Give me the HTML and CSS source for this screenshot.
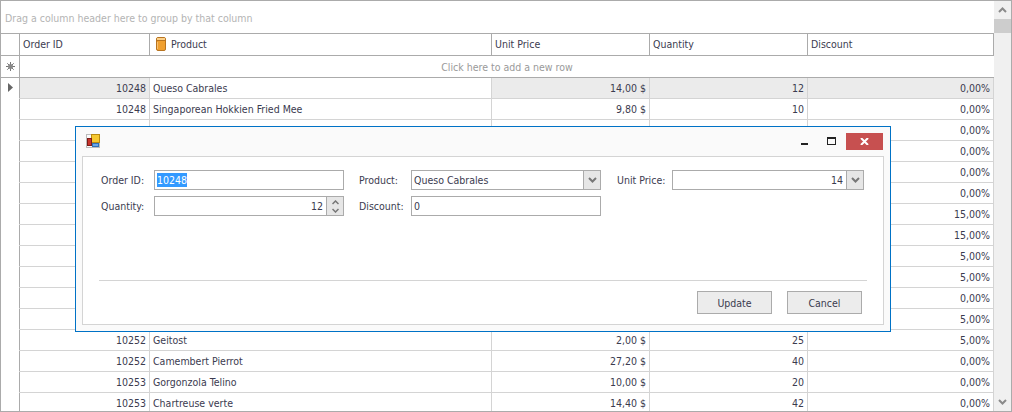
FILE: index.html
```html
<!DOCTYPE html>
<html lang="en">
<head>
  <meta charset="UTF-8" />
  <title>Grid edit form</title>
  <link rel="stylesheet" href="styles.css">
</head>
<body>
  <div class="grid-control">
    <div class="group-panel">Drag a column header here to group by that column</div>
    <div class="grid-main">
      <table class="grid">
        <colgroup>
          <col class="col-ind"><col class="col-id"><col class="col-product"><col class="col-price"><col class="col-qty"><col class="col-disc">
        </colgroup>
        <thead>
          <tr>
            <th class="ind"></th>
            <th>Order ID</th>
            <th class="th-product">
              <svg class="db-icon" width="10" height="14" viewBox="0 0 10 14"><rect x="0.5" y="0.5" width="9" height="13" rx="1.5" fill="#f0a030" stroke="#b87420"/><rect x="1" y="1" width="8" height="2" fill="#fbd08a"/><path d="M1 3.5h8" stroke="#b87420"/><path d="M1.5 5v7" stroke="#f8c070"/></svg>
              Product
            </th>
            <th>Unit Price</th>
            <th>Quantity</th>
            <th>Discount</th>
          </tr>
        </thead>
        <tbody>
          <tr class="new-row">
            <td class="ind"><svg width="9" height="9" viewBox="0 0 9 9"><path d="M4.5 0v9M0 4.5h9M1.3 1.3l6.4 6.4M7.7 1.3l-6.4 6.4" stroke="#777" stroke-width="1"/><circle cx="4.5" cy="4.5" r="2.5" fill="#888"/></svg></td>
            <td colspan="5" class="new-hint">Click here to add a new row</td>
          </tr>
          <tr class="focused">
            <td class="ind"><svg width="5" height="9" viewBox="0 0 5 9"><path d="M0 0l5 4.5-5 4.5z" fill="#666"/></svg></td>
            <td class="num">10248</td><td>Queso Cabrales</td><td class="num">14,00 $</td><td class="num">12</td><td class="num">0,00%</td>
          </tr>
          <tr><td class="ind"></td><td class="num">10248</td><td>Singaporean Hokkien Fried Mee</td><td class="num">9,80 $</td><td class="num">10</td><td class="num">0,00%</td></tr>
          <tr><td class="ind"></td><td class="num">10248</td><td>Mozzarella di Giovanni</td><td class="num">34,80 $</td><td class="num">5</td><td class="num">0,00%</td></tr>
          <!-- rows behind the dialog only show their discount -->
          <tr><td class="ind"></td><td></td><td></td><td></td><td></td><td class="num">0,00%</td></tr>
          <tr><td class="ind"></td><td></td><td></td><td></td><td></td><td class="num">0,00%</td></tr>
          <tr><td class="ind"></td><td></td><td></td><td></td><td></td><td class="num">0,00%</td></tr>
          <tr><td class="ind"></td><td></td><td></td><td></td><td></td><td class="num">15,00%</td></tr>
          <tr><td class="ind"></td><td></td><td></td><td></td><td></td><td class="num">15,00%</td></tr>
          <tr><td class="ind"></td><td></td><td></td><td></td><td></td><td class="num">5,00%</td></tr>
          <tr><td class="ind"></td><td></td><td></td><td></td><td></td><td class="num">5,00%</td></tr>
          <tr><td class="ind"></td><td></td><td></td><td></td><td></td><td class="num">0,00%</td></tr>
          <tr><td class="ind"></td><td></td><td></td><td></td><td></td><td class="num">5,00%</td></tr>
          <tr><td class="ind"></td><td class="num">10252</td><td>Geitost</td><td class="num">2,00 $</td><td class="num">25</td><td class="num">5,00%</td></tr>
          <tr><td class="ind"></td><td class="num">10252</td><td>Camembert Pierrot</td><td class="num">27,20 $</td><td class="num">40</td><td class="num">0,00%</td></tr>
          <tr><td class="ind"></td><td class="num">10253</td><td>Gorgonzola Telino</td><td class="num">10,00 $</td><td class="num">20</td><td class="num">0,00%</td></tr>
          <tr><td class="ind"></td><td class="num">10253</td><td>Chartreuse verte</td><td class="num">14,40 $</td><td class="num">42</td><td class="num">0,00%</td></tr>
        </tbody>
      </table>
    </div>
    <div class="scrollbar">
      <div class="scroll-btn"><svg width="9" height="6" viewBox="0 0 9 6"><path d="M1 5l3.5-3.5L8 5" fill="none" stroke="#8a8a8a" stroke-width="2"/></svg></div>
      <div class="scroll-thumb"></div>
      <div class="scroll-track"></div>
      <div class="scroll-btn"><svg width="9" height="6" viewBox="0 0 9 6"><path d="M1 1l3.5 3.5L8 1" fill="none" stroke="#8a8a8a" stroke-width="2"/></svg></div>
    </div>
  </div>

  <div class="dialog">
    <div class="titlebar">
      <svg class="app-icon" width="14" height="14" viewBox="0 0 14 14">
        <path d="M0 0.5h14M0 4.5h6M0 13.5h14M0.5 0v14M13.5 0v14" stroke="#bbb" fill="none"/>
        <rect x="5.5" y="0.5" width="8" height="8" fill="#f6c830" stroke="#b98a10"/>
        <rect x="1.5" y="4.5" width="4" height="7" fill="#c8342c" stroke="#7d1c18"/>
        <rect x="6.5" y="9.5" width="6" height="3" fill="#6aa6e8" stroke="#2f6fb5"/>
      </svg>
      <div class="win-buttons">
        <span class="win-min"></span>
        <span class="win-max"></span>
        <span class="win-close"><svg width="9" height="7" viewBox="0 0 9 7"><path d="M1 0l7 7M8 0l-7 7" stroke="#fff" stroke-width="2"/></svg></span>
      </div>
    </div>
    <div class="dialog-panel">
      <div class="form-grid">
        <label class="lbl lbl-start">Order ID:</label>
        <div class="field"><span class="field-text"><span class="selected">10248</span></span></div>
        <label class="lbl">Product:</label>
        <div class="field"><span class="field-text">Queso Cabrales</span><span class="drop-btn"><svg width="9" height="6" viewBox="0 0 9 6"><path d="M1 1l3.5 3.5L8 1" fill="none" stroke="#777" stroke-width="2"/></svg></span></div>
        <label class="lbl lbl-last">Unit Price:</label>
        <div class="field"><span class="field-text right">14</span><span class="drop-btn"><svg width="9" height="6" viewBox="0 0 9 6"><path d="M1 1l3.5 3.5L8 1" fill="none" stroke="#777" stroke-width="2"/></svg></span></div>

        <label class="lbl lbl-start">Quantity:</label>
        <div class="field"><span class="field-text right">12</span>
          <span class="spin-btn">
            <svg width="7" height="5" viewBox="0 0 7 5"><path d="M0.5 4l3-3 3 3" fill="none" stroke="#777" stroke-width="1.5"/></svg>
            <svg width="7" height="5" viewBox="0 0 7 5"><path d="M0.5 1l3 3 3-3" fill="none" stroke="#777" stroke-width="1.5"/></svg>
          </span>
        </div>
        <label class="lbl">Discount:</label>
        <div class="field"><span class="field-text">0</span></div>
      </div>
      <div class="dialog-footer">
        <button class="btn">Update</button>
        <button class="btn">Cancel</button>
      </div>
    </div>
  </div>
</body>
</html>
```

FILE: styles.css
```css
html, body {
  margin: 0;
  padding: 0;
  height: 100%;
  overflow: hidden;
}
body {
  font-family: 'DejaVu Sans Condensed', 'DejaVu Sans', sans-serif;
  font-stretch: condensed;
  font-size: 10.5px;
  color: #3b3b4f;
  background: #fff;
}
.grid-control {
  position: relative;
  box-sizing: border-box;
  width: 1012px;
  height: 412px;
  border: 1px solid #ababab;
  overflow: hidden;
  padding-right: 17px;
}
.group-panel {
  height: 32px;
  line-height: 34px;
  padding-left: 4px;
  color: #b4b4b4;
  border-bottom: 1px solid #ababab;
}
.grid-main {
  height: 377px;
  overflow: hidden;
}
.grid {
  table-layout: fixed;
  border-collapse: separate;
  border-spacing: 0;
  width: 993px;
}
.col-ind { width: 19px; }
.col-id { width: 130px; }
.col-product { width: 342px; }
.col-price { width: 158px; }
.col-qty { width: 158px; }
.col-disc { width: 186px; }

.grid th {
  box-sizing: border-box;
  height: 22px;
  padding: 0 0 1px 3px;
  font-weight: normal;
  text-align: left;
  border-right: 1px solid #ababab;
  border-bottom: 1px solid #ababab;
}
.grid th.th-product {
  padding-left: 6px;
}
.db-icon {
  vertical-align: -3px;
  margin-right: 2px;
}
.grid td {
  box-sizing: border-box;
  height: 21px;
  padding: 0 3px;
  border-right: 1px solid #d4d4d4;
  border-bottom: 1px solid #d4d4d4;
  white-space: nowrap;
  overflow: hidden;
}
.grid td.ind, .grid th.ind {
  padding: 0;
  text-align: center;
  border-right: 1px solid #ababab;
  border-bottom-color: transparent;
}
.grid th.ind {
  border-bottom-color: #ababab;
}
.grid .new-row td {
  height: 22px;
  border-bottom-color: #ababab;
}
.grid .new-row td.new-hint {
  text-align: center;
  color: #9a9a9a;
  border-right: none;
}
.focused td:not(.ind) {
  background: #ebebeb;
}
.focused td:nth-child(3) {
  background: #fff;
}
.num {
  text-align: right;
}

/* scrollbar */
.scrollbar {
  position: absolute;
  top: 0;
  right: 0;
  bottom: 0;
  width: 17px;
  background: #f0f0f0;
  display: flex;
  flex-direction: column;
}
.scroll-btn {
  height: 18px;
  display: flex;
  align-items: center;
  justify-content: center;
}
.scroll-thumb {
  height: 14px;
  background: #cdcdcd;
}
.scroll-track {
  flex: 1;
}

/* edit form */
.dialog {
  position: absolute;
  left: 75px;
  top: 126px;
  box-sizing: border-box;
  width: 816px;
  height: 206px;
  background: #fafafa;
  border: 1px solid #0072c6;
  padding: 0 6px 6px 6px;
  display: flex;
  flex-direction: column;
}
.titlebar {
  height: 29px;
  display: flex;
  align-items: flex-start;
  justify-content: space-between;
  flex: none;
}
.app-icon {
  margin: 7px 0 0 4px;
}
.win-buttons {
  display: flex;
  align-items: flex-start;
}
.win-min {
  width: 7px;
  height: 2px;
  background: #222;
  margin: 16px 19px 0 0;
}
.win-max {
  box-sizing: border-box;
  width: 9px;
  height: 8px;
  border: 1px solid #222;
  border-top-width: 2px;
  margin: 10px 10px 0 0;
}
.win-close {
  width: 37px;
  height: 17px;
  background: #c75050;
  margin: 6px 1px 0 0;
  display: flex;
  align-items: center;
  justify-content: center;
}
.dialog-panel {
  flex: 1;
  background: #fff;
  border: 1px solid #d4d4d4;
  display: flex;
  flex-direction: column;
  padding: 13px 16px 10px 16px;
}
.form-grid {
  display: grid;
  grid-template-columns: 55px 190px 67px 190px 71px 192px;
  grid-auto-rows: 20px;
  gap: 6px 0;
  flex: 1;
  align-content: start;
}
.lbl {
  line-height: 21px;
  padding-left: 15px;
  white-space: nowrap;
}
.lbl-start {
  padding-left: 2px;
}
.lbl-last {
  padding-left: 16px;
}
.field {
  box-sizing: border-box;
  border: 1px solid #ababab;
  height: 20px;
  display: flex;
  background: #fff;
}
.field-text {
  flex: 1;
  line-height: 19px;
  padding: 0 3px 0 2px;
}
.field-text.right {
  text-align: right;
}
.selected {
  background: #3399ff;
  color: #fff;
  display: inline-block;
  height: 14px;
  line-height: 14px;
}
.drop-btn {
  flex: none;
  width: 16px;
  background: #e6e6e6;
  border-left: 1px solid #ababab;
  display: flex;
  align-items: center;
  justify-content: center;
}
.spin-btn {
  flex: none;
  width: 16px;
  background: #e6e6e6;
  border-left: 1px solid #ababab;
  display: flex;
  flex-direction: column;
  align-items: center;
  justify-content: center;
  gap: 3px;
}
.dialog-footer {
  flex: none;
  border-top: 1px solid #d4d4d4;
  display: flex;
  justify-content: flex-end;
  gap: 15px;
  padding: 10px 5px 0 0;
}
.btn {
  box-sizing: border-box;
  width: 75px;
  height: 23px;
  border: 1px solid #ababab;
  background: #ececec;
  color: #3b3b4f;
  font: inherit;
  padding: 0;
}
```
